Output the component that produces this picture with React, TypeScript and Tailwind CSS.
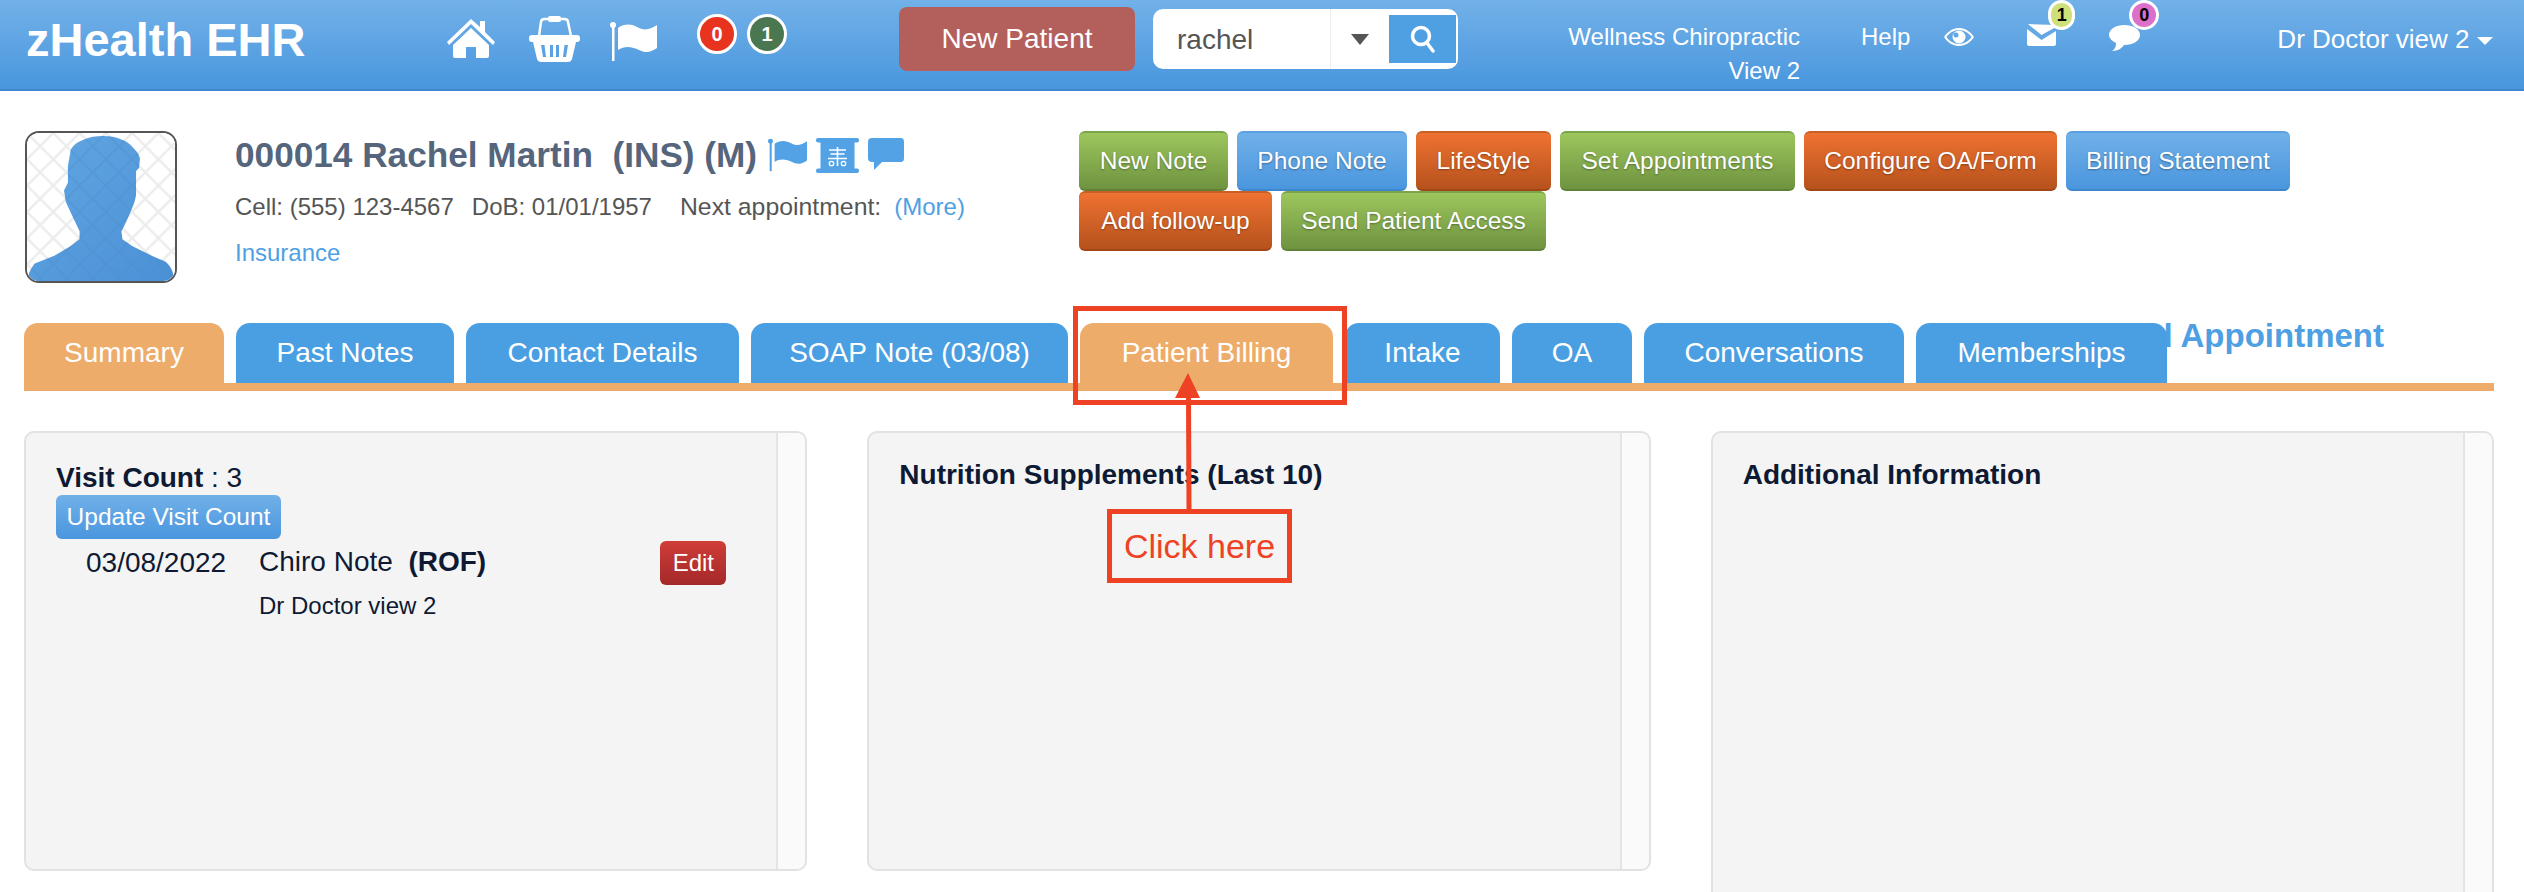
const HomeIcon = () => (
  <svg viewBox="0 0 48 40" className="w-[48px] h-[40px]" fill="white">
    <path d="M24 0 L33 8 V2 H38 V13 L48 23 L46 26 L24 5 L2 26 L0 23 Z" />
    <path d="M24 9 L42 26 V37 Q42 39 40 39 H29 V28 H19 V39 H8 Q6 39 6 37 V26 Z" />
  </svg>
);

const BasketIcon = () => (
  <svg viewBox="0 0 51 46" className="w-[51px] h-[46px]" fill="white">
    <path d="M10 20 L12 6 Q12 3 16 3 H35 Q39 3 39 6 L42 20" fill="none" stroke="white" strokeWidth="2.5" />
    <rect x="19" y="0" width="13" height="6" rx="2" />
    <rect x="0" y="19" width="51" height="7" rx="3" />
    <path d="M4 26 H47 L43 43 Q42 46 39 46 H12 Q9 46 8 43 Z M12 29 L14 41 H17 L15.500 29 Z M21 29 V41 H24 V29 Z M27 29 V41 H30 V29 Z M35.500 29 L34 41 H37 L39 29 Z" fillRule="evenodd" />
  </svg>
);

const FlagIcon = ({ className, fill }: { className: string; fill: string }) => (
  <svg viewBox="0 0 47 39" className={className} fill={fill}>
    <circle cx="3" cy="3" r="3" />
    <rect x="2" y="3" width="2.500" height="36" />
    <path d="M8 6 C16 0 24 3 29 6 C35 9 41 7 47 3 V26 C40 31 35 31 29 28 C23 25 15 23 8 28 Z" />
  </svg>
);

const ScrollIcon = () => (
  <svg viewBox="0 0 43 35" className="w-[43px] h-[35px]">
    <rect x="0" y="0" width="43" height="4.500" rx="2" fill="#52a2e5" />
    <rect x="0" y="30.500" width="43" height="4.500" rx="2" fill="#52a2e5" />
    <rect x="4.500" y="4" width="34" height="27" fill="#52a2e5" />
    <path d="M21.500 9 V28 M13 12 H30 M14.500 16 H28.500 M12 20.500 H31" stroke="white" strokeWidth="1.600" fill="none" />
    <circle cx="15.500" cy="25.500" r="2.200" stroke="white" strokeWidth="1.300" fill="none" />
    <circle cx="27.500" cy="25.500" r="2.200" stroke="white" strokeWidth="1.300" fill="none" />
  </svg>
);

const ChatIcon = ({ className, fill }: { className: string; fill: string }) => (
  <svg viewBox="0 0 37 33" className={className} fill={fill}>
    <path d="M4 0 H33 Q36 0 36 4 V20 Q36 24 33 24 H14 L6 32 V24 H4 Q0 24 0 20 V4 Q0 0 4 0 Z" />
  </svg>
);

const EyeIcon = () => (
  <svg viewBox="0 0 30 18" className="w-[30px] h-[18px]" fill="white">
    <path fillRule="evenodd" d="M15 0 C23 0 28 6 30 9 C28 12 23 18 15 18 C7 18 2 12 0 9 C2 6 7 0 15 0 Z M15 2 C10 2 5 5 2.500 9 C5 13 10 16 15 16 C20 16 25 13 27.500 9 C25 5 20 2 15 2 Z" />
    <path fillRule="evenodd" d="M15 2.500 A6.500 6.500 0 1 1 15 15.500 A6.500 6.500 0 1 1 15 2.500 Z M12 4.500 A2.500 2.500 0 1 0 12 9.500 A2.500 2.500 0 1 0 12 4.500 Z" />
  </svg>
);

const MailIcon = () => (
  <svg viewBox="0 0 29 22" className="w-[29px] h-[22px]" fill="white">
    <path d="M1 0 L14.500 11 L29 3 V1 Z" />
    <path d="M0 5 L14.500 16 L29 7 V20 Q29 22 27 22 H2 Q0 22 0 20 Z" />
  </svg>
);

const BubbleIcon = () => (
  <svg viewBox="0 0 31 26" className="w-[31px] h-[26px]" fill="white">
    <path d="M15.500 0 C24 0 31 4 31 10 C31 16 24 20 15 20 C13 23 9 26 3 26 C6 24 7 22 7 18 C3 16 0 13 0 10 C0 4 7 0 15.500 0 Z" />
  </svg>
);

const bust =
  "M78 3 C92 3 103 8 108 14 C113 19 116 23 116 27 L115 36 L112 39 V52 L112 64 C111 69 110 73 108 77 L102 91 L97 101 L98 109 L108 116 L128 126 L142 132 C146 135 149 140 150 144 V152 H2 V144 C4 140 6 136 8 134 L28 126 L45 116 L54 109 V101 L45 82 L40 71 L38 59 L42 51 L42 34 L45 17 C48 12 52 9 58 7 C64 4 71 3 78 3 Z";

const Avatar = () => (
  <div className="w-[152px] h-[152px] rounded-[14px] border-2 border-[#555] overflow-hidden shrink-0">
    <svg viewBox="0 0 152 152" className="w-full h-full">
      <defs>
        <pattern id="mesh" width="27" height="27" patternUnits="userSpaceOnUse">
          <path d="M0 0 L27 27 M27 0 L0 27" stroke="#ececec" strokeWidth="2.500" fill="none" />
        </pattern>
        <pattern id="meshDark" width="27" height="27" patternUnits="userSpaceOnUse">
          <path d="M0 0 L27 27 M27 0 L0 27" stroke="#4d8fcc" strokeWidth="2" fill="none" />
        </pattern>
        <linearGradient id="skin" x1="0" y1="0" x2="1" y2="1">
          <stop offset="0" stopColor="#62a7e2" />
          <stop offset="1" stopColor="#4a90d6" />
        </linearGradient>
      </defs>
      <rect width="152" height="152" fill="white" />
      <rect width="152" height="152" fill="url(#mesh)" />
      <path d={bust} fill="url(#skin)" />
      <path d={bust} fill="url(#meshDark)" opacity="0.45" />
    </svg>
  </div>
);

const Count = ({ value, color }: { value: string; color: string }) => (
  <span
    className={`flex items-center justify-center w-[40px] h-[40px] rounded-full border-[3px] border-white text-white font-bold text-[20px] ${color}`}
  >
    {value}
  </span>
);

const Panel = ({ h, children }: { h: string; children?: React.ReactNode }) => (
  <div className={`flex rounded-[10px] border-2 border-[#e2e2e2] bg-[#f4f4f4] overflow-hidden ${h}`}>
    <div className="flex-1 min-w-0 pt-[26px] pl-[30px] pr-[48px] text-[#0e1a33]">{children}</div>
    <div className="w-[29px] border-l-2 border-[#e4e4e4] bg-[#fafafa]" />
  </div>
);

const green = "bg-gradient-to-b from-[#9dc65d] to-[#6f9340] border-t-2 border-b-2 border-t-[#7ba34a] border-b-[#5f8237]";
const blue = "bg-gradient-to-b from-[#70b0e8] to-[#4a96de] border-t-2 border-b-2 border-t-[#5ba0e0] border-b-[#3f86cd]";
const orange = "bg-gradient-to-b from-[#ef7231] to-[#b6521d] border-t-2 border-b-2 border-t-[#c85f25] border-b-[#a34616]";

const actions = [
  { label: "New Note", cls: `w-[149px] ${green}` },
  { label: "Phone Note", cls: `w-[170px] ${blue}` },
  { label: "LifeStyle", cls: `w-[135px] ${orange}` },
  { label: "Set Appointments", cls: `w-[235px] ${green}` },
  { label: "Configure OA/Form", cls: `w-[253px] ${orange}` },
  { label: "Billing Statement", cls: `w-[224px] ${blue}` },
  { label: "Add follow-up", cls: `w-[193px] ${orange}` },
  { label: "Send Patient Access", cls: `w-[265px] ${green}` },
];

const tabs = [
  { label: "Summary", cls: "w-[200px]", active: true },
  { label: "Past Notes", cls: "w-[218px]" },
  { label: "Contact Details", cls: "w-[273px]" },
  { label: "SOAP Note (03/08)", cls: "w-[317px]" },
  { label: "Patient Billing", cls: "w-[253px]", active: true },
  { label: "Intake", cls: "w-[155px]" },
  { label: "OA", cls: "w-[120px]" },
  { label: "Conversations", cls: "w-[260px]" },
  { label: "Memberships", cls: "w-[251px]" },
];

export default function App() {
  return (
    <div className="relative w-[2524px] h-[892px] overflow-hidden bg-white font-['Liberation_Sans',Arial,sans-serif]">
      <header className="flex items-center h-[91px] pb-[11px] pl-[26px] border-b-2 border-[#3f86cd] bg-gradient-to-b from-[#72b1e9] to-[#4896dd] text-white">
        <div className="w-[421px] text-[47px] font-bold leading-none">zHealth EHR</div>
        <div className="flex items-center">
          <HomeIcon />
          <span className="ml-[34px]"><BasketIcon /></span>
          <span className="ml-[30px] mt-[4px]"><FlagIcon className="w-[47px] h-[39px]" fill="white" /></span>
        </div>
        <div className="flex gap-[10px] ml-[40px] mb-[10px]">
          <Count value="0" color="bg-[#e8341f]" />
          <Count value="1" color="bg-[#4a7650]" />
        </div>
        <button className="ml-[112px] w-[236px] h-[64px] rounded-[8px] bg-[#b35f5c] text-[28px]">New Patient</button>
        <div className="flex items-center ml-[18px] w-[305px] h-[60px] rounded-[10px] bg-white text-[#555]">
          <span className="w-[177px] pl-[24px] pt-[2px] text-[28px]">rachel</span>
          <span className="flex items-center justify-center w-[59px] h-full border-l border-[#eee]">
            <span className="w-0 h-0 border-x-[9px] border-x-transparent border-t-[11px] border-t-[#555]" />
          </span>
          <span className="flex items-center justify-center w-[67px] h-[48px] bg-[#4f9fe3]">
            <svg viewBox="0 0 26 28" className="w-[26px] h-[28px]" fill="none" stroke="white" strokeWidth="3.500">
              <circle cx="11" cy="11" r="8.500" />
              <path d="M17 18 L23 26" strokeLinecap="round" />
            </svg>
          </span>
        </div>
        <div className="self-start mt-[20px] w-[342px] text-right text-[24px] leading-[34px]">
          Wellness Chiropractic
          <br />
          View 2
        </div>
        <span className="self-start mt-[20px] ml-[61px] text-[24px] leading-[34px]">Help</span>
        <span className="self-start mt-[28px] ml-[34px]"><EyeIcon /></span>
        <span className="relative self-start mt-[24px] ml-[53px]">
          <MailIcon />
          <span className="absolute -top-[24px] left-[21px] flex items-center justify-center w-[27px] h-[30px] rounded-full border-[3px] border-white bg-[#cfe07a] text-black font-bold text-[18px]">1</span>
        </span>
        <span className="relative self-start mt-[25px] ml-[53px]">
          <BubbleIcon />
          <span className="absolute -top-[25px] left-[20px] flex items-center justify-center w-[30px] h-[30px] rounded-full border-[3px] border-white bg-[#dc6fc8] text-black font-bold text-[18px]">0</span>
        </span>
        <span className="self-start mt-[22px] ml-[137px] text-[26px] leading-[35px]">Dr Doctor view 2</span>
        <span className="self-start mt-[37px] ml-[7px] w-0 h-0 border-x-[8px] border-x-transparent border-t-[8px] border-t-white" />
      </header>

      <section className="flex mt-[40px] pl-[25px]">
        <Avatar />
        <div className="w-[844px] ml-[58px] text-[#555]">
          <div className="flex items-center h-[46px] mt-[1px]">
            <h2 className="text-[35.200px] font-bold text-[#55657c] leading-none">000014 Rachel Martin&nbsp;&nbsp;(INS) (M)</h2>
            <span className="ml-[11px]"><FlagIcon className="w-[39px] h-[34px]" fill="#52a2e5" /></span>
            <span className="ml-[9px]"><ScrollIcon /></span>
            <span className="ml-[9px] mb-[1px]"><ChatIcon className="w-[37px] h-[33px]" fill="#52a2e5" /></span>
          </div>
          <p className="mt-[13px] text-[24px] leading-[32px]">
            Cell: (555) 123-4567<span className="ml-[18px]">DoB: 01/01/1957</span>
            <span className="ml-[28px] text-[24.800px]">Next appointment:</span>
            <span className="ml-[13px] text-[#4f9fe3]">(More)</span>
          </p>
          <p className="mt-[14px] text-[24px] leading-[32px] text-[#4f9fe3]">Insurance</p>
        </div>
        <div className="flex flex-wrap content-start gap-x-[9px] w-[1300px]">
          {actions.map((a) => (
            <button
              key={a.label}
              className={`h-[60px] rounded-[6px] text-white text-[24.500px] [text-shadow:0_1px_2px_rgba(0,0,0,0.35)] ${a.cls}`}
            >
              {a.label}
            </button>
          ))}
        </div>
      </section>

      <nav className="relative mt-[40px] ml-[24px] w-[2470px]">
        <span className="absolute right-[110px] -top-[6px] text-[33px] font-bold leading-[38px] text-[#4f9fe3]">Add Appointment</span>
        <div className="relative flex gap-[12px] h-[60px] items-start">
          {tabs.map((t) => (
            <div
              key={t.label}
              className={`flex items-center justify-center rounded-t-[14px] text-white text-[28px] ${t.cls} ${
                t.active ? "h-[68px] pb-[8px] bg-[#edac6a]" : "h-[60px] bg-[#4a9fe3]"
              }`}
            >
              {t.label}
            </div>
          ))}
        </div>
        <div className="h-[8px] bg-[#edac6a]" />
      </nav>

      <main className="grid grid-cols-3 gap-[60px] mt-[40px] ml-[24px] w-[2470px] items-start">
        <Panel h="h-[440px]">
          <div className="text-[28px] leading-[32px] mt-[3px]">
            <b>Visit Count</b> : 3
          </div>
          <button className="block mt-[1px] w-[225px] h-[44px] rounded-[6px] bg-gradient-to-b from-[#70b0e8] to-[#4a96de] text-white text-[24.500px]">
            Update Visit Count
          </button>
          <div className="flex mt-[2px]">
            <span className="w-[203px] pl-[30px] pt-[2px] text-[28px] leading-[40px]">03/08/2022</span>
            <div className="flex-1">
              <div className="flex items-start justify-between">
                <span className="text-[28px] leading-[42px]">
                  Chiro Note&nbsp;&nbsp;<b>(ROF)</b>
                </span>
                <button className="mr-[2px] w-[66px] h-[44px] rounded-[6px] bg-gradient-to-b from-[#d03d3a] to-[#a32928] text-white text-[24px]">
                  Edit
                </button>
              </div>
              <div className="mt-[6px] text-[24px] leading-[30px]">Dr Doctor view 2</div>
            </div>
          </div>
        </Panel>
        <Panel h="h-[440px]">
          <div className="text-[28px] font-bold leading-[32px]">Nutrition Supplements (Last 10)</div>
        </Panel>
        <Panel h="h-[500px]">
          <div className="text-[28px] font-bold leading-[32px]">Additional Information</div>
        </Panel>
      </main>

      {/* callout drawn over the page */}
      <div className="absolute left-[1073px] top-[306px] w-[274px] h-[99px] border-[5px] border-[#ee4225]" />
      <svg className="absolute left-[1164px] top-[370px] w-[50px] h-[142px]" viewBox="0 0 50 142" fill="#ee4225">
        <path d="M22 25 H27 L27.500 140 H22.500 Z" />
        <path d="M24 3 L36 28 H11 Z" />
      </svg>
      <div className="absolute left-[1107px] top-[509px] flex items-center justify-center w-[185px] h-[74px] border-[5px] border-[#ee4225] text-[34px] text-[#ee4225]">
        Click here
      </div>
    </div>
  );
}
